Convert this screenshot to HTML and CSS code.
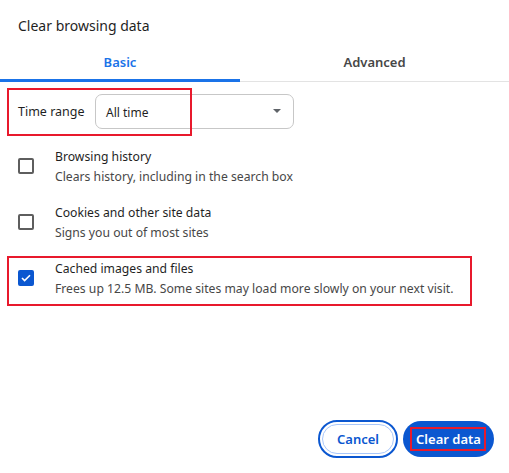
FILE: index.html
```html
<!DOCTYPE html>
<html lang="en">
<head>
  <meta charset="UTF-8" />
  <meta name="viewport" content="width=device-width, initial-scale=1.0" />
  <title>Clear browsing data</title>
  <link rel="stylesheet" href="styles.css">
</head>

<body>
  <div class="dialog">
    <div class="dialog-title">Clear browsing data</div>

    <div class="tabs">
      <div class="tab tab-active">Basic</div>
      <div class="tab">Advanced</div>
    </div>

    <div class="content">
      <div class="range-row">
        <div class="mark mark-range"></div>
        <span class="range-label">Time range</span>
        <div class="select">
          <span>All time</span>
          <span class="select-arrow"></span>
        </div>
      </div>

      <div class="option">
        <span class="checkbox"></span>
        <div class="option-text">
          <div class="option-title">Browsing history</div>
          <div class="option-desc">Clears history, including in the search box</div>
        </div>
      </div>

      <div class="option">
        <span class="checkbox"></span>
        <div class="option-text">
          <div class="option-title">Cookies and other site data</div>
          <div class="option-desc">Signs you out of most sites</div>
        </div>
      </div>

      <div class="option">
        <div class="mark mark-option"></div>
        <span class="checkbox checked">
          <svg width="10" height="8" viewBox="0 0 10 8"><path d="M1 4l2.6 2.6L9 1.2" fill="none" stroke="#fff" stroke-width="1.6"/></svg>
        </span>
        <div class="option-text">
          <div class="option-title">Cached images and files</div>
          <div class="option-desc">Frees up 12.5 MB. Some sites may load more slowly on your next visit.</div>
        </div>
      </div>
    </div>

    <div class="actions">
      <button class="btn btn-cancel"><span class="btn-inner">Cancel</span></button>
      <button class="btn btn-clear">
        <span class="mark mark-button"></span>
        Clear data
      </button>
    </div>
  </div>
</body>
</html>
```

FILE: styles.css
```css
body {
  margin: 0;
  background: #fff;
  font-family: 'Noto Sans', 'Open Sans', sans-serif;
  color: #1f1f1f;
}

.dialog {
  width: 509px;
  height: 473px;
  display: flex;
  flex-direction: column;
  position: relative;
}

.dialog-title {
  padding: 16px 18px 0;
  font-size: 14px;
  height: 27px;
  color: #1f1f1f;
}

.tabs {
  display: flex;
  border-bottom: 1px solid #e3e3e3;
  height: 38px;
}

.tab {
  flex: 1;
  text-align: center;
  font-size: 13px;
  font-weight: 600;
  color: #474747;
  padding-top: 10px;
  box-sizing: border-box;
}

.tab-active {
  flex: 0 0 240px;
  color: #1a73e8;
  border-bottom: 3px solid #1a73e8;
  margin-bottom: -1px;
}

.content {
  flex: 1;
  padding: 0 18px;
}

/* red highlight frames */
.mark {
  position: absolute;
  border: 2px solid #e8192c;
  pointer-events: none;
}

.range-row {
  position: relative;
  display: flex;
  align-items: center;
  height: 35px;
  margin-top: 12px;
}

.mark-range {
  left: -11px;
  top: -6px;
  width: 181px;
  height: 44px;
}

.range-label {
  font-size: 12.5px;
  color: #1f1f1f;
  width: 77px;
}

.select {
  width: 199px;
  height: 35px;
  border: 1px solid #c7c7c7;
  border-radius: 7px;
  display: flex;
  align-items: center;
  justify-content: space-between;
  padding: 2px 12px 0 10px;
  box-sizing: border-box;
  font-size: 12px;
  color: #1f1f1f;
}

.select-arrow {
  width: 0;
  height: 0;
  border-left: 4px solid transparent;
  border-right: 4px solid transparent;
  border-top: 4px solid #5f6368;
  margin-bottom: 3px;
}

.option {
  position: relative;
  display: flex;
  align-items: center;
  gap: 20px;
  height: 40px;
  margin-top: 17px;
}

.option + .option {
  margin-top: 16px;
}

.mark-option {
  left: -11px;
  top: -2px;
  width: 461px;
  height: 46px;
}

.checkbox {
  flex: 0 0 auto;
  width: 12px;
  height: 12px;
  border: 2px solid #5e5e5e;
  border-radius: 2px;
  display: flex;
  align-items: center;
  justify-content: center;
}

.checkbox.checked {
  background: #0b57d0;
  border-color: #0b57d0;
}

.option-text {
  display: flex;
  flex-direction: column;
  gap: 3px;
  margin-left: 1px;
}

.option-title {
  font-size: 12.2px;
  color: #1f1f1f;
}

.option-desc {
  font-size: 12.2px;
  color: #474747;
}

.actions {
  display: flex;
  justify-content: flex-end;
  gap: 5px;
  padding: 0 15px 15px 0;
}

.btn {
  font-family: inherit;
  font-size: 13px;
  font-weight: 600;
  border-radius: 20px;
  cursor: pointer;
  box-sizing: border-box;
}

.btn-cancel {
  width: 80px;
  height: 38px;
  padding: 2px;
  background: #fff;
  border: 2px solid #0b57d0;
  color: #0b57d0;
}

.btn-inner {
  display: flex;
  align-items: center;
  justify-content: center;
  height: 100%;
  border: 1px solid #a8c7fa;
  border-radius: 16px;
  box-sizing: border-box;
}

.btn-clear {
  position: relative;
  width: 91px;
  height: 36px;
  margin-top: 1px;
  background: #0b57d0;
  color: #fff;
  border: none;
}

.mark-button {
  left: 7px;
  top: 6px;
  width: 72px;
  height: 20px;
}
```
